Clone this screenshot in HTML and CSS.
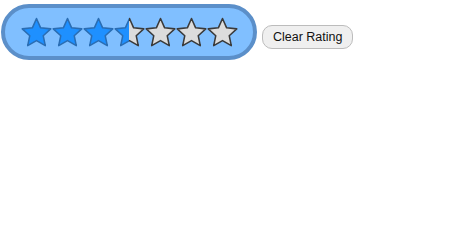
FILE: index.html
```html
<html>
	<head>
		<title>rating</title>
		<link rel="stylesheet" href="styles.css">
	</head>
	<body>
		<svg class="defs" width="0" height="0">
			<defs>
				<polygon id="star" points="15,1.5 19,10.5 28.8,11.5 21.5,18.1 23.5,27.7 15,22.8 6.5,27.7 8.5,18.1 1.2,11.5 11,10.5"/>
				<linearGradient id="half-fill" x1="0" x2="1" y1="0" y2="0">
					<stop offset="0.5" stop-color="#1e90ff"/>
					<stop offset="0.5" stop-color="#dcdcdc"/>
				</linearGradient>
				<linearGradient id="half-line" x1="0" x2="1" y1="0" y2="0">
					<stop offset="0.5" stop-color="#2a6db3"/>
					<stop offset="0.5" stop-color="#3a3a3a"/>
				</linearGradient>
			</defs>
		</svg>
		<div class="row">
			<div class="rating">
				<svg class="star on" viewBox="0 0 30 30"><use href="#star"/></svg>
				<svg class="star on" viewBox="0 0 30 30"><use href="#star"/></svg>
				<svg class="star on" viewBox="0 0 30 30"><use href="#star"/></svg>
				<svg class="star half" viewBox="0 0 30 30"><use href="#star"/></svg>
				<svg class="star" viewBox="0 0 30 30"><use href="#star"/></svg>
				<svg class="star" viewBox="0 0 30 30"><use href="#star"/></svg>
				<svg class="star" viewBox="0 0 30 30"><use href="#star"/></svg>
			</div>
			<button class="clear" type="button">Clear Rating</button>
		</div>
	</body>
</html>
```

FILE: styles.css
```css
body {
	margin: 0;
	font-family: "Liberation Sans", Arial, sans-serif;
	background: #fff;
}

.defs {
	position: absolute;
}

.row {
	display: flex;
	align-items: center;
	padding: 4px 0 0 1px;
}

.rating {
	display: flex;
	box-sizing: border-box;
	width: 256px;
	height: 56px;
	padding: 9px 0 0 16px;
	background: #80bfff;
	border: 4px solid #5b8fc9;
	border-radius: 28px;
}

.star {
	width: 31px;
	height: 31px;
	fill: #dcdcdc;
	stroke: #3a3a3a;
	stroke-width: 1.5;
	stroke-linejoin: round;
}

.star.on {
	fill: #1e90ff;
	stroke: #2a6db3;
}

.star.half {
	fill: url(#half-fill);
	stroke: url(#half-line);
}

.clear {
	margin: 9px 0 0 5px;
	padding: 4px 10px 4px 10px;
	font-family: "Liberation Sans", Arial, sans-serif;
	font-size: 12.5px;
	color: #111;
	background: #efefef;
	border: 1px solid #bcbcbc;
	border-radius: 10px;
}
```
